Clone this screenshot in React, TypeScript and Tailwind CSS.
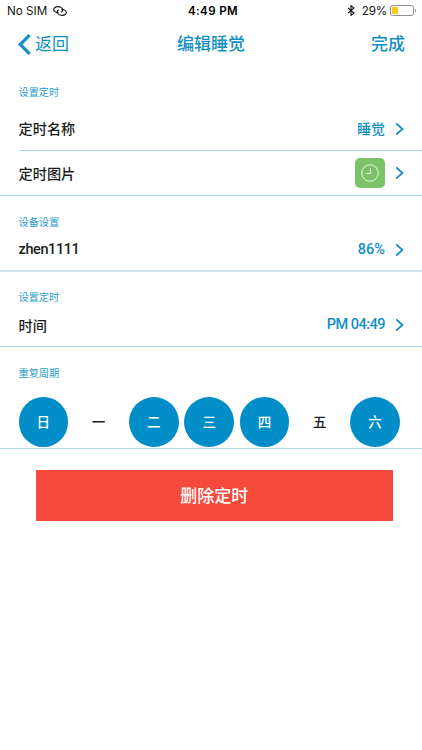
import React from 'react';
import clsx from 'clsx';

interface SettingRowProps {
  label: string;
  value?: string;
  className?: string;
  labelClass?: string;
  valueClass?: string;
  children?: React.ReactNode;
}

const weekDays = [
  { label: '日', active: true },
  { label: '一', active: false },
  { label: '二', active: true },
  { label: '三', active: true },
  { label: '四', active: true },
  { label: '五', active: false },
  { label: '六', active: true },
];

const Chevron = () => (
  <svg className="ml-[11px] h-[14px] w-[8px] shrink-0" viewBox="0 0 8 14" fill="none">
    <path d="M0.2 1.4L6.5 7L0.2 12.6" stroke="#1290c4" strokeWidth="1.8" />
  </svg>
);

const StatusBar = () => (
  <div className="grid h-[22px] grid-cols-3 items-center text-[11.5px] leading-none text-[#151515]">
    <div className="flex items-center pl-[7px]">
      <span className="pt-px text-[11.7px]">No SIM</span>
      <svg className="ml-[6px] h-[10px] w-[14px]" viewBox="0 0 14 10" fill="none" stroke="#151515" strokeWidth="1.2">
        <path d="M5.6 6.6C3 6.7 0.8 5.4 0.7 3.6C0.6 1.8 2.5 0.6 4.9 0.7C7.4 0.8 9.7 2.2 9.7 4.1C9.7 5.2 8.9 6 7.9 6.3" />
        <path d="M8.4 3.4C11 3.3 13.2 4.6 13.3 6.4C13.4 8.2 11.5 9.4 9.1 9.3C6.6 9.2 4.3 7.8 4.3 5.9C4.3 4.8 5.1 4 6.1 3.7" />
      </svg>
    </div>
    <div className="pt-px pl-[4px] text-center text-[11.5px] font-semibold tracking-[0.4px] text-black">4:49 PM</div>
    <div className="flex items-center justify-end pr-[5px]">
      <svg className="mr-[7px] h-[11px] w-[8px]" viewBox="0 0 8 11" fill="none" stroke="#151515" strokeWidth="1.1">
        <path d="M1 3L7 8L4 10.4V0.6L7 3L1 8" />
      </svg>
      <span className="pt-px text-[11.7px] tracking-[-0.2px]">29%</span>
      <svg className="ml-[3px] h-[11px] w-[27px]" viewBox="0 0 27 11" fill="none">
        <rect x="0.5" y="0.5" width="23" height="10" rx="2" stroke="#8f8f8f" />
        <rect x="2" y="2" width="6" height="7" rx="0.6" fill="#fdc70a" />
        <path d="M25 3.7C26.6 4.2 26.6 6.8 25 7.3Z" fill="#8f8f8f" />
      </svg>
    </div>
  </div>
);

const NavBar = () => (
  <div className="grid h-[44px] grid-cols-3 items-center text-[17px] leading-none text-[#1290c4]">
    <div className="flex items-center pl-[18px]">
      <svg className="mr-[4px] h-[21px] w-[13px]" viewBox="0 0 13 21" fill="none">
        <path d="M11.6 1.2L2.2 10.5L11.6 19.8" stroke="#1290c4" strokeWidth="3.2" />
      </svg>
      <span className="font-normal">返回</span>
    </div>
    <div className="text-center font-medium">编辑睡觉</div>
    <div className="pr-[17px] text-right font-medium">完成</div>
  </div>
);

const SectionTitle: React.FC<{ children: React.ReactNode }> = ({ children }) => (
  <div className="px-[18.5px] text-[10.2px] leading-[14px] text-[#2b9ccb]">{children}</div>
);

const SettingRow: React.FC<SettingRowProps> = ({
  label,
  value,
  className = '',
  labelClass = 'text-[14.2px]',
  valueClass = 'text-[14px]',
  children,
}) => (
  <div className={clsx('ml-[18.5px] flex items-center pr-[18px] leading-none', className)}>
    <span className={clsx('pt-[2px] font-medium text-[#1c1c1c]', labelClass)}>{label}</span>
    <div className="ml-auto flex items-center">
      {value && <span className={clsx('pt-px font-medium text-[#1290c4]', valueClass)}>{value}</span>}
      {children}
      <Chevron />
    </div>
  </div>
);

export default function App() {
  return (
    <div className="min-h-[750px] w-[422px] bg-white font-['Inter','Noto_Sans_CJK_SC',sans-serif]">
      <StatusBar />
      <NavBar />

      <section className="border-b border-[#a5d3e8] pt-[19px]">
        <SectionTitle>设置定时</SectionTitle>
        <SettingRow
          label="定时名称"
          value="睡觉"
          className="h-[52px] border-b border-[#a5d9ee] pt-[8px]"
        />
        <SettingRow label="定时图片" className="h-[44px]">
          <div className="flex size-[30px] items-center justify-center rounded-[5px] bg-[#7cc268]">
            <svg className="size-[18px]" viewBox="0 0 18 18" fill="none" stroke="#e9f6e4" strokeWidth="1">
              <circle cx="9" cy="9" r="8.3" />
              <path d="M9.5 4V9.5H4.8" />
            </svg>
          </div>
        </SettingRow>
      </section>

      <section className="border-b-2 border-[#cfe7f3] pt-[19px]">
        <SectionTitle>设备设置</SectionTitle>
        <SettingRow
          label="zhen1111"
          value="86%"
          className="h-[41px]"
          labelClass="font-['Roboto',sans-serif] text-[14.5px] tracking-[-0.4px]"
          valueClass="font-['Roboto',sans-serif] text-[14.5px]"
        />
      </section>

      <section className="border-b border-[#a5d3e8] pt-[18px]">
        <SectionTitle>设置定时</SectionTitle>
        <SettingRow
          label="时间"
          value="PM 04:49"
          className="h-[42px]"
          valueClass="font-['Roboto',sans-serif] text-[14.5px] tracking-[-0.5px]"
        />
      </section>

      <section className="border-b border-[#b0d9e8] pt-[18.5px]">
        <SectionTitle>重复周期</SectionTitle>
        <div className="flex gap-[5.8px] pt-[17.5px] pb-px pl-[18.5px]">
          {weekDays.map((day) => (
            <div
              key={day.label}
              className={clsx(
                'flex size-[49.5px] items-center justify-center rounded-full pt-px text-[13.5px] leading-none font-medium',
                day.active ? 'bg-[#018dc7] text-white' : 'text-[#1c1c1c]'
              )}
            >
              {day.label}
            </div>
          ))}
        </div>
      </section>

      <button className="mt-[21.5px] ml-[36px] flex h-[51px] w-[356.5px] items-center justify-center bg-[#f5493b] pt-px text-[17px] leading-none font-medium text-white">
        删除定时
      </button>
    </div>
  );
}
